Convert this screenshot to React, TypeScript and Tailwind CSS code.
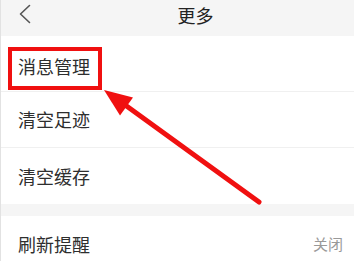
const rows = ["消息管理", "清空足迹", "清空缓存"];

export default function App() {
  return (
    <div
      className="relative h-[261px] w-[354px] overflow-hidden border-l border-[#e2e2e2] bg-white text-[#2e2e2e]"
      style={{ fontFamily: '"Noto Sans CJK SC", "Noto Sans", sans-serif' }}
    >
      <header className="relative flex h-[36px] items-center justify-center bg-[#f5f5f5] pb-[7px] pl-[36px]">
        <svg className="absolute left-[16px] top-[3px]" width="16" height="22" viewBox="0 0 16 22">
          <polyline points="12.5,2.5 3.5,11 12.5,19.5" fill="none" stroke="#555" strokeWidth="1.6" strokeLinecap="round" strokeLinejoin="round" />
        </svg>
        <h1 className="text-[18px] leading-none text-[#222]">更多</h1>
      </header>

      <ul>
        {rows.map((label, i) => (
          <li
            key={label}
            className={`flex h-[56px] items-center px-[17px] text-[18px] ${i === 0 ? "pt-[5px]" : ""} ${i < rows.length - 1 ? "border-b border-[#f0f0f0]" : ""}`}
          >
            {label}
          </li>
        ))}
      </ul>

      <div className="h-[12px] bg-[#f5f5f5]" />

      <div className="flex h-[56px] items-center justify-between pl-[17px] pr-[11px]">
        <span className="text-[18px]">刷新提醒</span>
        <span className="text-[15px] text-[#999]">关闭</span>
      </div>

      {/* annotation overlay */}
      <div className="pointer-events-none absolute left-[7px] top-[47px] h-[43px] w-[94px] border-4 border-[#f01010]" />
      <svg className="pointer-events-none absolute left-0 top-0" width="354" height="261" viewBox="0 0 354 261">
        <line x1="258" y1="202" x2="120" y2="102" stroke="#f01010" strokeWidth="5" strokeLinecap="round" />
        <polygon points="103,90 132,97.5 119,115.5" fill="#f01010" />
      </svg>
    </div>
  );
}
